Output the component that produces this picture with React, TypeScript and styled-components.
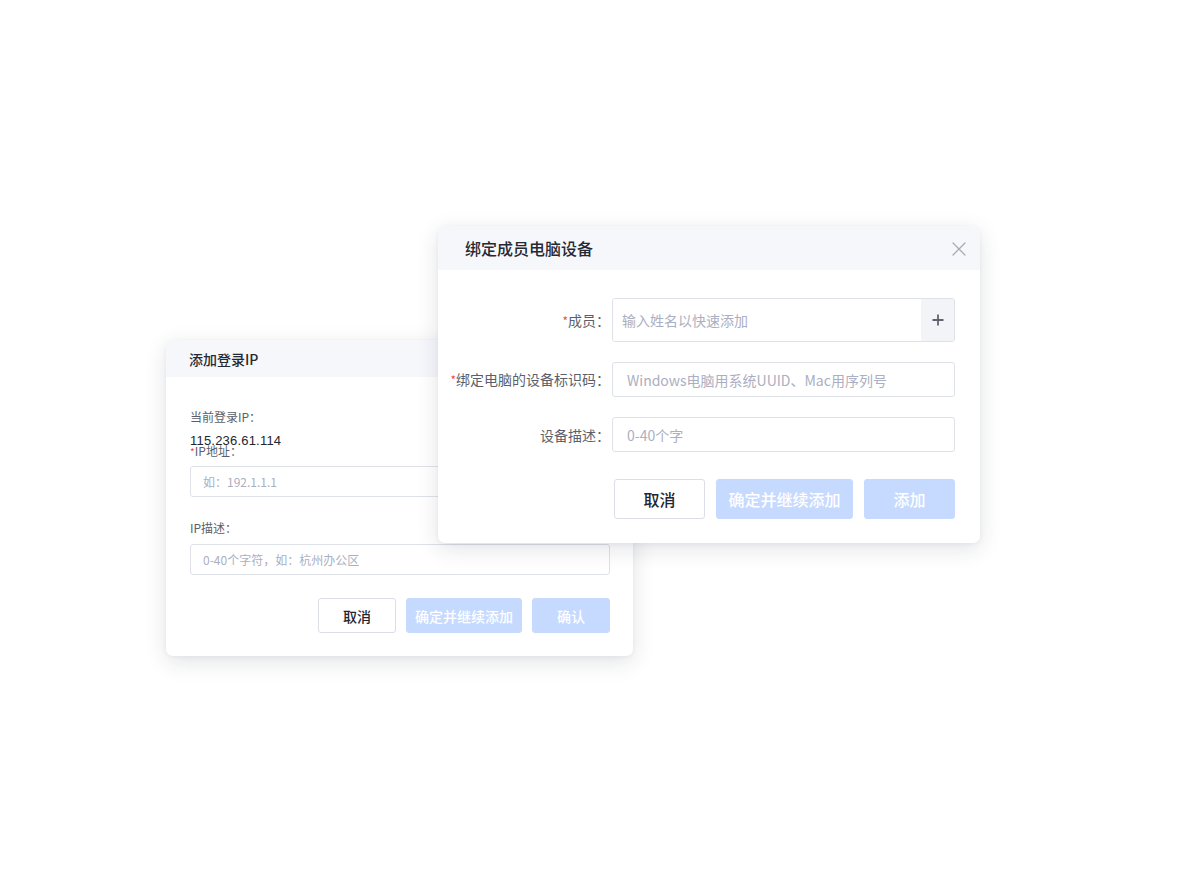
import React from 'react';
import styled, { createGlobalStyle } from 'styled-components';

// ── Global ───────────────────────────────────────────────────────────────────

const GlobalStyle = createGlobalStyle`
  html, body {
    margin: 0;
    padding: 0;
    background: #ffffff;
  }
  body {
    font-family: "Noto Sans CJK SC", "Noto Sans", sans-serif;
    -webkit-font-smoothing: antialiased;
  }
  * { box-sizing: border-box; }
`;

// ── Palette ──────────────────────────────────────────────────────────────────

const c = {
  title: '#262932',
  label: '#5b5f6b',
  text: '#23262e',
  placeholder: '#abafc1',
  border: '#dfe1e9',
  headerBg: '#f6f7fb',
  primaryOff: '#c6daff',
  required: '#f5483b',
  icon: '#a6aabb',
};

// ── Canvas / windows ─────────────────────────────────────────────────────────

const Stage = styled.div`
  position: relative;
  width: 1192px;
  height: 884px;
  overflow: hidden;
  background: #fff;
`;

const Dialog = styled.div<{ $x: number; $y: number; $w: number; $z: number }>`
  position: absolute;
  left: ${p => p.$x}px;
  top: ${p => p.$y}px;
  width: ${p => p.$w}px;
  z-index: ${p => p.$z};
  background: #fff;
  border-radius: 7px;
  overflow: hidden;
  box-shadow: 0 6px 22px rgba(30, 35, 60, 0.13), 0 1px 4px rgba(30, 35, 60, 0.05);
`;

const Header = styled.div<{ $h: number; $pl: number }>`
  height: ${p => p.$h}px;
  padding: 0 13px 0 ${p => p.$pl}px;
  display: flex;
  align-items: center;
  justify-content: space-between;
  background: ${c.headerBg};
`;

const Title = styled.div<{ $size: number }>`
  font-size: ${p => p.$size}px;
  line-height: 1;
  font-weight: 500;
  color: ${c.title};
`;

const CloseBtn = styled.button`
  width: 16px;
  height: 16px;
  padding: 0;
  border: 0;
  background: none;
  display: flex;
  align-items: center;
  justify-content: center;
  margin-top: 2px;
`;

// ── Back dialog (添加登录IP) ──────────────────────────────────────────────────

const BackBody = styled.div`
  padding: 31px 23px 23px 24px;
  display: flex;
  flex-direction: column;
`;

const SmallLabel = styled.div<{ $mt?: number }>`
  font-size: 12px;
  line-height: 17px;
  height: 17px;
  color: ${c.label};
  margin-top: ${p => p.$mt ?? 0}px;
`;

const IpValue = styled.div`
  font-size: 13px;
  line-height: 18px;
  height: 18px;
  margin-top: 7px;
  color: ${c.text};
  font-family: "Liberation Sans", "Noto Sans", sans-serif;
  letter-spacing: 0.2px;
`;

const Star = styled.span`
  color: ${c.required};
  font-size: 0.85em;
`;

const SmallInput = styled.input<{ $mt?: number }>`
  display: block;
  width: 420px;
  height: 31px;
  margin-top: ${p => p.$mt ?? 8}px;
  padding: 0 12px;
  border: 1px solid ${c.border};
  border-radius: 3px;
  background: #fff;
  font-family: inherit;
  font-size: 12px;
  color: ${c.text};
  outline: none;
  &::placeholder { color: ${c.placeholder}; }
`;

const Actions = styled.div<{ $mt: number; $gap: number }>`
  display: flex;
  justify-content: flex-end;
  gap: ${p => p.$gap}px;
  margin-top: ${p => p.$mt}px;
`;

const Button = styled.button<{ $w: number; $h: number; $size: number; $primary?: boolean }>`
  width: ${p => p.$w}px;
  height: ${p => p.$h}px;
  padding: 0;
  border-radius: 3px;
  font-family: inherit;
  font-size: ${p => p.$size}px;
  font-weight: 500;
  line-height: 1;
  border: 1px solid ${p => (p.$primary ? c.primaryOff : '#dcdee5')};
  background: ${p => (p.$primary ? c.primaryOff : '#fff')};
  color: ${p => (p.$primary ? '#ffffff' : c.text)};
  cursor: pointer;
`;

// ── Front dialog (绑定成员电脑设备) ───────────────────────────────────────────

const FrontBody = styled.div`
  padding: 28px 25px 24px 0;
`;

const Form = styled.div`
  display: grid;
  grid-template-columns: 174px 343px;
  align-items: center;
  row-gap: 20px;
`;

const FieldLabel = styled.label`
  justify-self: end;
  padding-right: 2px;
  font-size: 14px;
  line-height: 20px;
  color: ${c.label};
  white-space: nowrap;
`;

const InputGroup = styled.div`
  display: flex;
  height: 44px;
  border: 1px solid ${c.border};
  border-radius: 3px;
  overflow: hidden;
`;

const GroupInput = styled.input`
  flex: 1;
  min-width: 0;
  border: 0;
  padding: 0 9px;
  font-family: inherit;
  font-size: 14px;
  color: ${c.text};
  outline: none;
  &::placeholder { color: ${c.placeholder}; }
`;

const AddOn = styled.button`
  width: 33px;
  border: 0;
  padding: 0;
  background: #f3f4f8;
  display: flex;
  align-items: center;
  justify-content: center;
`;

const Input = styled.input`
  display: block;
  width: 343px;
  height: 35px;
  padding: 0 14px;
  border: 1px solid ${c.border};
  border-radius: 3px;
  font-family: inherit;
  font-size: 14px;
  color: ${c.text};
  outline: none;
  &::placeholder { color: ${c.placeholder}; }
`;

// ── Icons ────────────────────────────────────────────────────────────────────

const CloseIcon = () => (
  <svg width="14" height="14" viewBox="0 0 14 14" fill="none">
    <path d="M1 1L13 13M13 1L1 13" stroke={c.icon} strokeWidth="1.3" strokeLinecap="round" />
  </svg>
);

const PlusIcon = () => (
  <svg width="12" height="12" viewBox="0 0 12 12" fill="none">
    <path d="M6 0.5V11.5M0.5 6H11.5" stroke="#5f636d" strokeWidth="1.8" />
  </svg>
);

// ── App ──────────────────────────────────────────────────────────────────────

export default function App() {
  return (
    <>
      <GlobalStyle />
      <Stage>
        <Dialog $x={166} $y={340} $w={467} $z={1}>
          <Header $h={37} $pl={23}>
            <Title $size={14}>添加登录IP</Title>
          </Header>
          <BackBody>
            <SmallLabel>当前登录IP：</SmallLabel>
            <IpValue>115.236.61.114</IpValue>
            <SmallLabel $mt={-8}>
              <Star>*</Star>IP地址：
            </SmallLabel>
            <SmallInput $mt={7} placeholder="如：192.1.1.1" />
            <SmallLabel $mt={22}>IP描述：</SmallLabel>
            <SmallInput placeholder="0-40个字符，如：杭州办公区" />
            <Actions $mt={23} $gap={10}>
              <Button $w={78} $h={35} $size={14}>取消</Button>
              <Button $w={116} $h={35} $size={14} $primary>确定并继续添加</Button>
              <Button $w={78} $h={35} $size={14} $primary>确认</Button>
            </Actions>
          </BackBody>
        </Dialog>

        <Dialog $x={438} $y={226} $w={542} $z={2}>
          <Header $h={44} $pl={27}>
            <Title $size={16}>绑定成员电脑设备</Title>
            <CloseBtn aria-label="关闭">
              <CloseIcon />
            </CloseBtn>
          </Header>
          <FrontBody>
            <Form>
              <FieldLabel>
                <Star>*</Star>成员：
              </FieldLabel>
              <InputGroup>
                <GroupInput placeholder="输入姓名以快速添加" />
                <AddOn aria-label="添加">
                  <PlusIcon />
                </AddOn>
              </InputGroup>
              <FieldLabel>
                <Star>*</Star>绑定电脑的设备标识码：
              </FieldLabel>
              <Input placeholder="Windows电脑用系统UUID、Mac用序列号" />
              <FieldLabel>设备描述：</FieldLabel>
              <Input placeholder="0-40个字" />
            </Form>
            <Actions $mt={27} $gap={11}>
              <Button $w={91} $h={40} $size={16}>取消</Button>
              <Button $w={137} $h={40} $size={16} $primary>确定并继续添加</Button>
              <Button $w={91} $h={40} $size={16} $primary>添加</Button>
            </Actions>
          </FrontBody>
        </Dialog>
      </Stage>
    </>
  );
}
